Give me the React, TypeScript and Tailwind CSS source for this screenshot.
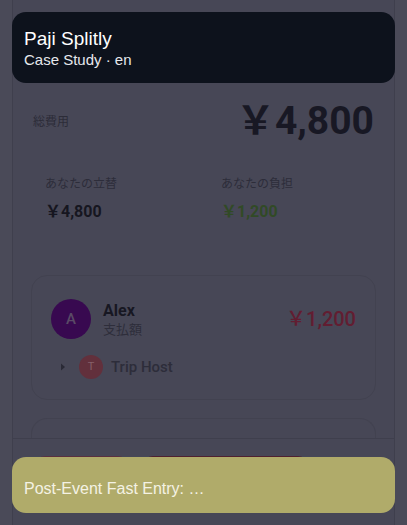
import React from 'react';

const cjk = { fontFamily: 'Roboto, "Noto Sans CJK JP", sans-serif' };

const App: React.FC = () => {
  return (
    <div className="relative w-full h-[525px] overflow-hidden bg-[#4a4a58]">
      {/* dimmed phone screen */}
      <div className="mx-[12px] h-full border-x border-[#3f3f4d] bg-[#474756] flex flex-col" style={cjk}>
        <div className="h-[102px]" />

        {/* summary */}
        <div className="px-[20px]">
          <div className="flex items-center justify-between">
            <span className="text-[12px] text-[#2c2c38]">総費用</span>
            <span className="text-[39px] font-bold text-[#181824] leading-none">￥4,800</span>
          </div>
          <div className="mt-[24px] grid grid-cols-2 gap-[5px]">
            <div className="rounded-[8px] px-[12px] py-[10px]">
              <div className="text-[12px] text-[#2d2d3a]">あなたの立替</div>
              <div className="mt-[7px] text-[16px] font-bold text-[#161620]">￥4,800</div>
            </div>
            <div className="rounded-[8px] px-[15px] py-[10px]">
              <div className="text-[12px] text-[#2d2d3a]">あなたの負担</div>
              <div className="mt-[7px] text-[16px] font-bold text-[#314a26]">￥1,200</div>
            </div>
          </div>
        </div>

        {/* member list */}
        <div className="mt-[41px] px-[18px] flex flex-col gap-[18px]">
          <div className="rounded-[16px] border border-[#424250] px-[19px] pt-[23px] pb-[20px]">
            <div className="flex items-center">
              <div className="w-[40px] h-[40px] rounded-full bg-[#380950] flex items-center justify-center text-[15px] font-medium text-[#5a4a66]">A</div>
              <div className="ml-[12px] flex-1">
                <div className="text-[16px] font-bold text-[#171722] leading-[20px]">Alex</div>
                <div className="text-[13px] text-[#2e2e3b] leading-[17px]">支払額</div>
              </div>
              <div className="text-[20px] font-medium text-[#621d31]">￥1,200</div>
            </div>
            <div className="mt-[16px] flex items-center">
              <svg width="12" height="12" viewBox="0 0 12 12" className="ml-[6px]">
                <path d="M4 2.5 L8 6 L4 9.5 Z" fill="#2a2a36" />
              </svg>
              <div className="ml-[10px] w-[24px] h-[24px] rounded-full bg-[#62303c] flex items-center justify-center text-[11px] text-[#86606a]">T</div>
              <span className="ml-[8px] text-[15px] font-medium text-[#2d2d3a]">Trip Host</span>
            </div>
          </div>
          <div className="h-[60px] rounded-t-[16px] border border-b-0 border-[#424250] relative">
            <div className="absolute left-[32px] top-[19px] w-[20px] h-[3px] rounded-full bg-[#2a3062]" />
          </div>
        </div>
      </div>

      {/* bottom action bar */}
      <div className="absolute left-[13px] right-[13px] top-[438px] bottom-0 border-t border-[#3f3f4d] bg-[#474756] flex gap-[15px] px-[22px] pt-[17px]">
        <div className="w-[93px] h-[40px] rounded-[10px] border border-[#5a3040]" />
        <div className="w-[165px] h-[40px] rounded-[10px] bg-[#4e2030]" />
      </div>

      {/* caption overlays */}
      <div className="absolute left-[12px] right-[12px] top-[12px] h-[71px] rounded-[14px] bg-[#0d121c] px-[12px] pt-[16px]" style={{ fontFamily: '"Liberation Sans", Arial, sans-serif' }}>
        <div className="text-[19px] text-white leading-[22px]">Paji Splitly</div>
        <div className="text-[15px] text-[#e6e8ec] leading-[20px]">Case Study · en</div>
      </div>
      <div className="absolute left-[12px] right-[12px] top-[457px] h-[56px] rounded-[14px] bg-[#b0ab6a] px-[12px] flex items-end pb-[12px]" style={{ fontFamily: '"Liberation Sans", Arial, sans-serif' }}>
        <span className="text-[16px] text-[#f4f2e4]">Post-Event Fast Entry: …</span>
      </div>
    </div>
  );
};

export default App;
